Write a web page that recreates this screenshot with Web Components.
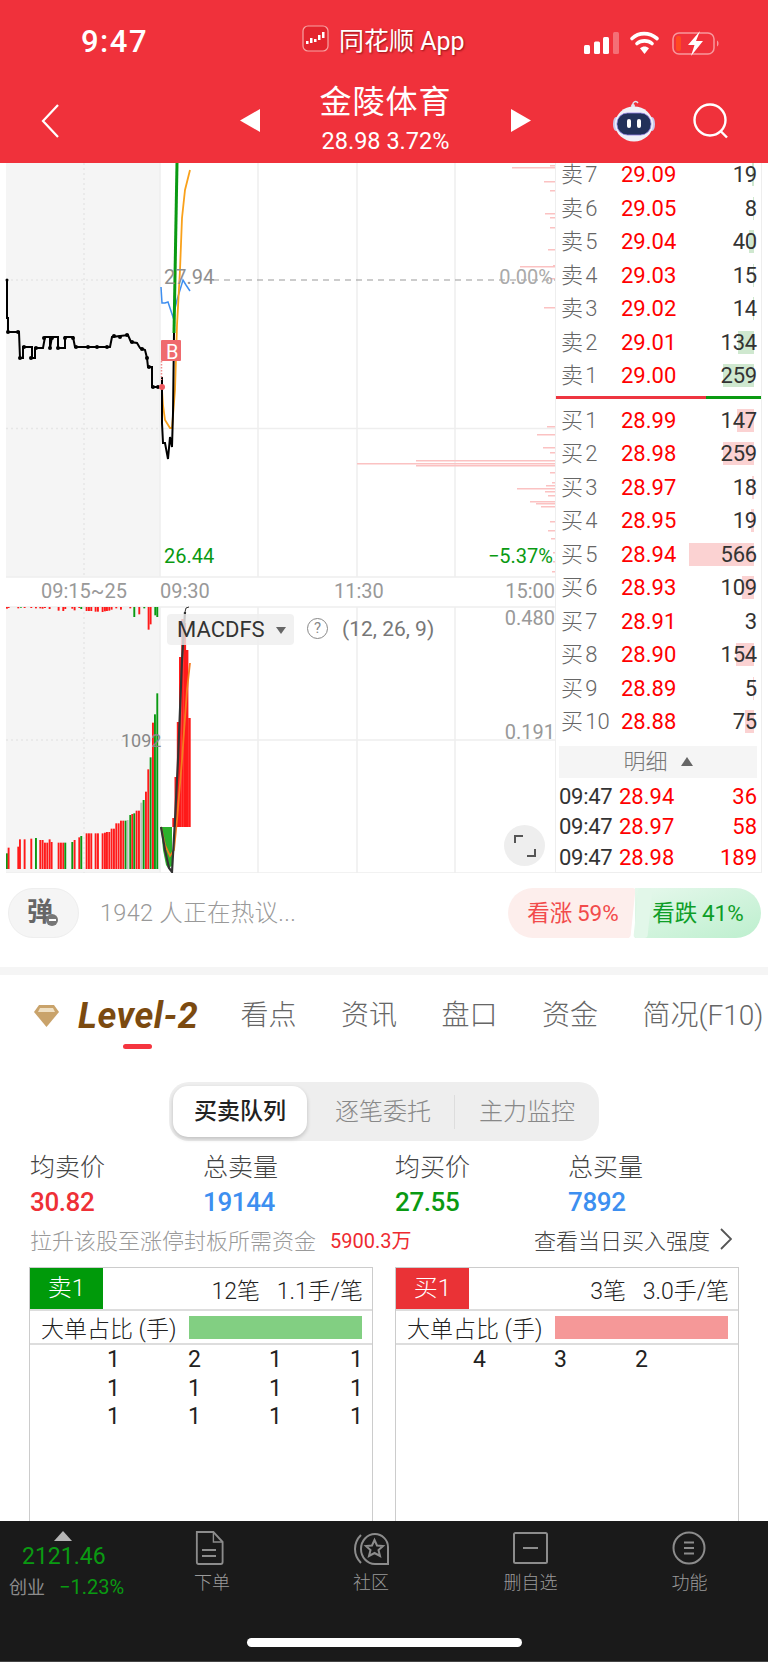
<!DOCTYPE html>
<html lang="zh">
<head>
<meta charset="utf-8">
<title>金陵体育</title>
<style>
  html, body { margin: 0; padding: 0; background: #fff; }
  body {
    width: 768px;
    height: 1662px;
    overflow: hidden;
    display: flex;
    flex-direction: column;
    font-family: Roboto, "Noto Sans CJK SC", sans-serif;
  }
  main { flex: 1; min-height: 0; overflow: hidden; }
  .market { display: flex; height: 710px; }
</style>
</head>
<body>
  <st-header name="金陵体育" quote="28.98 3.72%"></st-header>
  <main>
    <div class="market">
      <st-chart></st-chart>
      <st-book></st-book>
    </div>
    <st-comment></st-comment>
    <st-tabs></st-tabs>
    <st-stats></st-stats>
    <st-queues></st-queues>
  </main>
  <st-dock></st-dock>

<script>
const FONT = 'Roboto, "Noto Sans CJK SC", sans-serif';

class StHeader extends HTMLElement {
  connectedCallback() {
    this.attachShadow({mode: 'open'}).innerHTML = `
      <style>
        :host { display: block; height: 163px; background: #f0313b; color: #fff; font-family: ${FONT}; flex: none; }
        .status { height: 80px; display: grid; grid-template-columns: 302px 280px 186px; align-items: center; padding-top: 3px; box-sizing: border-box; }
        .time { font-size: 31px; font-weight: 500; padding-left: 81px; letter-spacing: 1.500px; }
        .app { display: flex; align-items: center; gap: 10px; font-size: 25px; text-shadow: 1px 1px 2px rgba(90,0,0,.6); margin-top: -6px; }
        .sys { display: flex; align-items: center; }
        .nav { height: 83px; display: grid; grid-template-columns: 240px 20px 1fr 20px 237px; align-items: center; }
        .back { padding-left: 40px; display: flex; margin-top: -2px; }
        .tri { display: flex; margin-top: -2px; }
        .title { text-align: center; margin-top: -6px; }
        .name { font-size: 32px; line-height: 40px; letter-spacing: 1px; }
        .quote { font-size: 23.500px; line-height: 30px; margin-top: 4px; }
        .right { display: flex; align-items: center; padding-left: 81px; gap: 37px; margin-top: -2px; }
      </style>
      <div class="status">
        <div class="time">9:47</div>
        <div class="app">
          <svg width="27" height="27" viewBox="0 0 27 27">
            <rect x="1" y="1" width="25" height="25" rx="5" fill="#e3242e" stroke="#f7a3a3" stroke-width="1.2"/>
            <g fill="#fff"><rect x="4" y="16" width="2.5" height="3"/><rect x="8" y="13" width="2.5" height="5"/><rect x="12" y="14" width="2.5" height="3"/><rect x="16" y="10" width="2.5" height="5"/><rect x="20" y="7" width="2.5" height="6"/></g>
          </svg>
          <span>同花顺 App</span>
        </div>
        <div class="sys">
          <svg width="140" height="30" viewBox="580 27 140 30">
            <g fill="#fff">
              <rect x="582" y="45" width="6" height="9" rx="1.5"/>
              <rect x="592" y="41.500" width="6" height="12.500" rx="1.500"/>
              <rect x="601" y="37" width="6" height="17" rx="1.500"/>
              <rect x="611" y="32" width="6" height="22" rx="1.500" opacity=".3"/>
            </g>
            <g fill="none" stroke="#fff" stroke-width="3.600" stroke-linecap="round">
              <path d="M630 38.500C637 32 647 32 655 38.500"/>
              <path d="M635 43.500C639 40 646 40 650 43.500"/>
            </g>
            <path d="M642.500 54L638 48.200C641 45.800 644 45.800 647 48.200Z" fill="#fff"/>
            <rect x="671" y="33" width="41" height="21" rx="6" fill="none" stroke="#fff" stroke-opacity=".5" stroke-width="1.500"/>
            <path d="M715 40.500C717 41.500 717 45.500 715 46.500Z" fill="#fff" fill-opacity=".5"/>
            <rect x="674" y="36" width="5" height="15" rx="2" fill="#ff4a20"/>
            <path d="M698 31L686 45H692.500L689 56L701 41H694Z" fill="#fff"/>
          </svg>
        </div>
      </div>
      <div class="nav">
        <div class="back">
          <svg width="20" height="36" viewBox="0 0 20 36"><path d="M18 2L3 18L18 34" fill="none" stroke="#fff" stroke-width="2.200"/></svg>
        </div>
        <div class="tri"><svg width="20" height="23" viewBox="0 0 20 23"><path d="M20 0V23L0 11.500Z" fill="#fff"/></svg></div>
        <div class="title">
          <div class="name">${this.getAttribute('name')}</div>
          <div class="quote">${this.getAttribute('quote')}</div>
        </div>
        <div class="tri"><svg width="20" height="23" viewBox="0 0 20 23"><path d="M0 0V23L20 11.500Z" fill="#fff"/></svg></div>
        <div class="right">
          <svg width="44" height="42" viewBox="0 0 44 42">
            <path d="M21 6C20 2 24 0 26 3" fill="none" stroke="#dfe3ef" stroke-width="1.500"/>
            <circle cx="21" cy="6" r="2" fill="#dfe3ef"/>
            <ellipse cx="4" cy="24" rx="3" ry="7" fill="#c9c8ee"/>
            <ellipse cx="40" cy="24" rx="3" ry="7" fill="#c9c8ee"/>
            <ellipse cx="22" cy="24" rx="19" ry="17.500" fill="#f0f1f8"/>
            <rect x="5" y="13" width="34" height="22" rx="10.500" fill="#22315a" stroke="#8f7fe0" stroke-width=".8"/>
            <rect x="15" y="19" width="4" height="9" rx="2" fill="#fff"/>
            <rect x="25" y="19" width="4" height="9" rx="2" fill="#fff"/>
          </svg>
          <svg width="36" height="36" viewBox="0 0 36 36"><circle cx="17" cy="17" r="15.500" fill="none" stroke="#fff" stroke-width="2.400"/><path d="M27.500 28L34 34.500" stroke="#fff" stroke-width="2.400"/></svg>
        </div>
      </div>`;
  }
}

class StChart extends HTMLElement {
  connectedCallback() {
    // [left edge in 3x crop px, top in 3x crop px, colour] of the pre-open volume bars
    const r = '#ff1a1a', g = '#0a9a12', s = '#bdbdbd';
    const vol = [[18,760,g],[23,743,r],[52,740,r],[57,718,r],[71,718,r],[91,716,r],[105,714,g],[118,720,r],[125,720,r],[132,728,r],[139,728,r],[146,718,r],[152,726,r],
      [173,728,r],[180,728,r],[187,728,r],[193,728,g],[214,726,g],[221,720,r],[235,712,r],[241,708,g],[257,700,r],[264,700,r],[271,700,r],[284,700,r],[291,700,r],
      [305,700,r],[312,698,r],[318,696,r],[325,696,r],[332,686,r],[339,686,r],[346,670,r],[353,670,r],[360,662,r],[367,662,r],[374,662,g],[380,660,s],[388,645,g],[394,642,r],
      [400,640,g],[407,632,r],[414,632,r],[421,608,s],[428,600,g],[435,575,r],[442,508,r],[449,472,g],[456,368,r],[462,343,g],[469,280,g]];
    const volBars = vol.map(([x, t, c]) => `<rect x="${x / 3}" y="${600 + t / 3}" width="1.9" height="${869 - 600 - t / 3}" fill="${c}"/>`).join('');
    const top = [[18,5,r],[23,3,r],[52,4,r],[60,2,g],[71,3,r],[91,3,r],[105,4,r],[118,4,r],[125,5,r],[132,3,r],[146,6,r],[173,11,r],[187,12,r],[193,6,r],[214,5,r],[221,10,r],[235,3,r],[241,6,g],
      [257,12,r],[264,12,r],[271,12,r],[284,14,r],[291,14,r],[305,15,r],[312,13,r],[318,12,r],[325,11,r],[332,8,r],[346,4,r],[360,8,r],[388,4,r],[400,30,g],[415,22,r],[430,4,g],[443,68,r],[449,52,r],[463,25,g],[469,30,g]];
    const topBars = top.map(([x, h, c]) => `<rect x="${x / 3}" y="607" width="1.9" height="${h / 3}" fill="${c}"/>`).join('');
    const sell = [[165,550],[167,512],[181,544],[190,550],[213,545],[217,550],[227,550],[249,548],[265,553],[266,520],[278,550],[307,544]];
    const buy = [[426,547],[434,537],[447,543],[452,550],[460,416],[463,357],[465,416],[472,550],[482,552],[485,546],[488,517],[491,545],[495,548],[501,530],[503,536],[506,541],[521,550],[530,548],[538,551],[552,553],[561,553],[571,552]];
    const depth = sell.concat(buy).map(([y, x]) => `<rect x="${x}" y="${y}" width="${555 - x}" height="1.500" fill="#fbc2c2"/>`).join('');
    const macdBars = [[172.3,818],[174.5,777],[176.8,722],[179,657],[181.3,619],[183.6,623],[185.9,650],[188.2,718]]
      .map(([x, y]) => `<rect x="${x}" y="${y}" width="2.500" height="${827 - y}" fill="${r}"/>`).join('');

    this.attachShadow({mode: 'open'}).innerHTML = `
      <style>
        :host { display: block; position: relative; width: 555px; height: 710px; flex: none; font-family: ${FONT}; overflow: hidden; }
        svg { display: block; }
        .t { position: absolute; font-size: 20px; line-height: 24px; color: #999; white-space: nowrap; }
        .chip { position: absolute; left: 167px; top: 451px; width: 127px; height: 31px; border-radius: 4px; background: rgba(238,238,238,.8); color: #333; font-size: 22px; line-height: 32px; padding-left: 10px; box-sizing: border-box; }
        .chip::after { content: ""; position: absolute; left: 109px; top: 13px; border: 5.500px solid transparent; border-top: 7px solid #666; border-bottom: 0; }
        .help { position: absolute; left: 307px; top: 455px; width: 21px; height: 21px; box-sizing: border-box; border: 1.500px solid #888; border-radius: 50%; font-size: 15px; line-height: 18px; text-align: center; color: #888; }
        .expand { position: absolute; left: 504px; top: 662px; width: 41px; height: 41px; border-radius: 50%; background: #eee; display: flex; align-items: center; justify-content: center; }
      </style>
      <svg width="555" height="710" viewBox="0 163 555 710">
        <rect x="6" y="163" width="154" height="414" fill="#f5f5f5"/>
        <rect x="6" y="607" width="154" height="266" fill="#f5f5f5"/>
        <g stroke="#eee" stroke-width="1.500" fill="none">
          <path d="M160 163V577M258 163V577M357 163V577M455 163V577M6 577H555M160 428.500H555"/>
          <path d="M160 607V873M258 607V873M357 607V873M455 607V873M6 607H555M160 740H555M6 873H555"/>
          <path d="M84 163V577M84 607V873M6 280H160M6 428.500H160M6 740H160" stroke="#e6e6e6" stroke-dasharray="2 3"/>
        </g>
        ${depth}
        <path d="M213 280H555" stroke="#999" stroke-width="1.200" stroke-dasharray="6 5"/>
        <path d="M161 287L162 303L165 303L168 302L173 317L177 300L183 280L186 285L190 291" fill="none" stroke="#3f8ff0" stroke-width="1.500"/>
        <path d="M162 390L163 405L165 420L170 428L172 428L175 390L177 325L180 270L182 218L185 190L190 170" fill="none" stroke="#f9a11b" stroke-width="1.800"/>
        <path d="M7 280V318H8V332H19L20 358H23V347H32V358H35V348H43L45 337H50V348L52 337H58V348H65V337H73L75 347H110L112 337L128 335L131 342L137 343L140 348L145 350L147 358L148 367H152V387H161" fill="none" stroke="#000" stroke-width="2"/>
        <g fill="#000">
          <circle cx="7" cy="280" r="1.500"/><circle cx="8" cy="332" r="2"/><circle cx="18" cy="332" r="2"/><circle cx="20" cy="358" r="2"/><circle cx="24" cy="347" r="2"/><circle cx="31" cy="358" r="2"/><circle cx="36" cy="348" r="2"/><circle cx="44" cy="338" r="2"/><circle cx="50" cy="348" r="2"/><circle cx="52" cy="338" r="2"/><circle cx="58" cy="348" r="2"/><circle cx="65" cy="338" r="2"/><circle cx="73" cy="338" r="2"/><circle cx="76" cy="347" r="2"/><circle cx="88" cy="347" r="2"/><circle cx="97" cy="347" r="2"/><circle cx="107" cy="347" r="2"/><circle cx="114" cy="336" r="2"/><circle cx="120" cy="337" r="2"/><circle cx="127" cy="335" r="2"/><circle cx="132" cy="342" r="2"/><circle cx="142" cy="349" r="2"/><circle cx="147" cy="358" r="2"/><circle cx="149" cy="367" r="2"/><circle cx="153" cy="387" r="2"/><circle cx="158" cy="387" r="2"/>
        </g>
        <path d="M162 377V423L163 443L165 443L168 459L170 437L172 447L173 413L174 333" fill="none" stroke="#000" stroke-width="2"/>
        <path d="M174 333L177 163" fill="none" stroke="#0a9a12" stroke-width="3"/>
        <rect x="161" y="340" width="20" height="21" rx="1" fill="#ef6a6e"/>
        <path d="M161.500 361V380" stroke="#ef8a8a" stroke-width="1.500" stroke-dasharray="1.500 1.500"/>
        <circle cx="162" cy="387" r="3" fill="#ef5a60"/>
        ${topBars}${volBars}
        <path d="M161 827H172V866L168 868L166 865L163 850Z" fill="#2cb12c"/>
        ${macdBars}
        <path d="M161 827L165 845L170 856L174 850L177 820L182 760L187 690L190 663" fill="none" stroke="#f57d1f" stroke-width="1.800"/>
        <path d="M161 827L165 850L169 868L172 872L175 820L178 760L182 660L185 612" fill="none" stroke="#333" stroke-width="2.200"/>
        <path d="M185 612L186 608L189 607" fill="none" stroke="#333" stroke-width="1"/>
      </svg>
      <span class="t" style="left:164px;top:102px;color:#8f8f8f">27.94</span>
      <span class="t" style="right:2px;top:102px;color:#aaa">0.00%</span>
      <span class="t" style="left:166px;top:177px;color:#fff;font-size:20px">B</span>
      <span class="t" style="left:164px;top:381px;color:#0a9a12">26.44</span>
      <span class="t" style="right:2px;top:381px;color:#0a9a12">−5.37%</span>
      <span class="t" style="left:41px;top:416px">09:15~25</span>
      <span class="t" style="left:160px;top:416px">09:30</span>
      <span class="t" style="left:334px;top:416px">11:30</span>
      <span class="t" style="right:0;top:416px">15:00</span>
      <span class="t" style="right:0;top:443px">0.480</span>
      <span class="t" style="right:0;top:557px">0.191</span>
      <span class="t" style="left:121px;top:566px;font-size:18px;color:#888">1092</span>
      <div class="chip">MACDFS</div>
      <div class="help">?</div>
      <span class="t" style="left:342px;top:454px;font-size:21px;color:#777">(12, 26, 9)</span>
      <div class="expand">
        <svg width="22" height="22" viewBox="0 0 22 22"><path d="M1 8V1H9M21 14V21H13" fill="none" stroke="#555" stroke-width="2"/></svg>
      </div>`;
  }
}

class BookRow extends HTMLElement {
  connectedCallback() {
    const bar = this.getAttribute('bar') || 0;
    const side = this.getAttribute('side');
    this.attachShadow({mode: 'open'}).innerHTML = `
      <style>
        :host { display: grid; grid-template-columns: 60px 1fr auto; align-items: center; position: relative; height: 33.500px; padding: 0 4px 0 5px; font-size: 22px; line-height: 33px; }
        .l { color: #666; white-space: nowrap; font-weight: 300; word-spacing: -3px; }
        .p { color: #f00; }
        .v { color: #333; position: relative; letter-spacing: -.2px; }
        .bar { position: absolute; right: 7px; top: 5px; height: 23px; background: ${side === 'sell' ? '#cfe8cf' : '#fbd2d2'}; }
      </style>
      <div class="bar" style="width:${bar}px"></div>
      <div class="l">${this.getAttribute('label')}</div>
      <div class="p">${this.getAttribute('price')}</div>
      <div class="v">${this.getAttribute('vol')}</div>`;
  }
}

class StBook extends HTMLElement {
  connectedCallback() {
    const sells = [['卖 7','29.09','19',2],['卖 6','29.05','8',1],['卖 5','29.04','40',5],['卖 4','29.03','15',1],['卖 3','29.02','14',1],['卖 2','29.01','134',16],['卖 1','29.00','259',31]];
    const buys = [['买 1','28.99','147',17],['买 2','28.98','259',31],['买 3','28.97','18',2],['买 4','28.95','19',3],['买 5','28.94','566',65],['买 6','28.93','109',12],['买 7','28.91','3',0],['买 8','28.90','154',18],['买 9','28.89','5',1],['买 10','28.88','75',9]];
    const row = (side) => ([l, p, v, b]) => `<book-row side="${side}" label="${l}" price="${p}" vol="${v}" bar="${b}"></book-row>`;
    const trades = [['28.94','36'],['28.97','58'],['28.98','189']];
    this.attachShadow({mode: 'open'}).innerHTML = `
      <style>
        :host { display: block; width: 207px; height: 710px; flex: none; box-sizing: border-box; border-left: 1.500px solid #eee; border-right: 1.500px solid #eee; border-bottom: 1.500px solid #eee; font-family: ${FONT}; overflow: hidden; }
        .sells { margin-top: -5px; }
        .sep { height: 3px; margin: 3px 0 5px; background: linear-gradient(90deg, #ee3540 0 73%, #0a9a12 73%); }
        .detail { margin: 7px 4px 4px 3px; height: 32px; background: #f5f5f5; color: #777; font-size: 22px; line-height: 32px; display: flex; justify-content: center; align-items: center; gap: 13px; font-weight: 300; }
        .detail::after { content: ""; border: 6px solid transparent; border-bottom: 9px solid #666; border-top: 0; }
        .trade { display: grid; grid-template-columns: 60px 1fr auto; height: 30.500px; line-height: 30px; font-size: 22px; padding: 0 4px 0 3px; color: #f00; }
        .trade b { font-weight: 400; color: #333; letter-spacing: -.3px; }
      </style>
      <div class="sells">${sells.map(row('sell')).join('')}</div>
      <div class="sep"></div>
      <div>${buys.map(row('buy')).join('')}</div>
      <div class="detail">明细</div>
      ${trades.map(([p, v]) => `<div class="trade"><b>09:47</b><span>${p}</span><span>${v}</span></div>`).join('')}`;
  }
}

class StComment extends HTMLElement {
  connectedCallback() {
    this.attachShadow({mode: 'open'}).innerHTML = `
      <style>
        :host { display: flex; align-items: flex-start; height: 102px; box-sizing: border-box; padding: 15px 7px 0 8px; border-bottom: 8px solid #f5f5f5; font-family: ${FONT}; }
        .dan { position: relative; width: 71px; height: 50px; box-sizing: border-box; background: #f5f5f5; border: 1.500px solid #eee; border-radius: 25px; color: #666; font-size: 26px; font-weight: 700; line-height: 46px; padding-left: 18px; }
        .dan::after { content: ""; position: absolute; left: 37px; top: 25px; width: 12px; height: 12px; border-radius: 50%; background: radial-gradient(#fff 0 0) center/7px 2px no-repeat #777; }
        .hint { margin-left: 21px; color: #999; font-size: 23.500px; line-height: 50px; flex: 1; font-weight: 300; letter-spacing: .3px; }
        .votes { display: flex; height: 50px; font-size: 22.500px; line-height: 50px; text-align: center; word-spacing: -1px; }
        .up, .down { position: relative; }
        .up { width: 121px; padding-left: 9px; box-sizing: border-box; color: #f24b4b; background: #fdeeec; border-radius: 25px 0 0 25px; white-space: nowrap; }
        .up::after { content: ""; position: absolute; right: -4px; top: 0; bottom: 0; width: 14px; background: #fdeeec; border-radius: 3px; transform: skewX(-6deg); }
        .down { width: 126px; margin-left: 6px; color: #0e9e28; background: linear-gradient(160deg, #e6f8ec, #bdefce); border-radius: 0 25px 25px 0; white-space: nowrap; }
        .down::before { content: ""; position: absolute; left: 1px; top: 0; bottom: 0; width: 14px; background: #e2f7e9; border-radius: 3px; transform: skewX(-6deg); }
        span { position: relative; z-index: 1; }
      </style>
      <div class="dan">弹</div>
      <div class="hint">1942 人正在热议...</div>
      <div class="votes"><div class="up"><span>看涨 59%</span></div><div class="down"><span>看跌 41%</span></div></div>`;
  }
}

class StTabs extends HTMLElement {
  connectedCallback() {
    this.attachShadow({mode: 'open'}).innerHTML = `
      <style>
        :host { display: block; height: 166px; font-family: ${FONT}; box-sizing: border-box; padding-top: 21px; }
        .row { display: flex; gap: 44.500px; height: 40px; padding-left: 34px; font-size: 28px; line-height: 40px; color: #666; white-space: nowrap; font-weight: 300; }
        .lv2 { position: relative; display: flex; align-items: center; width: 162px; flex: none; gap: 19px; }
        .lv2 svg { flex: none; }
        .lv2 b { font: italic 700 36px/40px Roboto, sans-serif; color: #7b4a10; letter-spacing: .5px; }
        .lv2::after { content: ""; position: absolute; left: 89px; top: 48px; width: 29px; height: 5px; border-radius: 3px; background: #f5353f; }
        .seg { display: flex; align-items: center; width: 430px; height: 59px; margin: 46px 0 0 169px; border-radius: 20px; background: #eee; box-sizing: border-box; padding: 0 4px; font-size: 24px; line-height: 34px; color: #888; font-weight: 300; }
        .seg div { text-align: center; }
        .on { width: 134px; height: 51px; line-height: 51px; border-radius: 15px; background: #fff; box-shadow: 0 2px 4px rgba(0,0,0,.2); color: #222; font-weight: 500; font-size: 23px; }
        .mid { width: 148px; height: 34px; box-sizing: border-box; padding-left: 5px; border-right: 1.500px solid #ddd; }
        .last { flex: 1; padding-left: 4px; }
      </style>
      <div class="row">
        <div class="lv2">
          <svg width="25" height="22" viewBox="0 0 25 22"><path d="M5 0H20L25 7L12.500 22L0 7Z" fill="#c9a36b"/><path d="M6 3H19L21 7H4Z" fill="#efe0c4"/></svg>
          <b>Level-2</b>
        </div>
        <div>看点</div><div>资讯</div><div>盘口</div><div>资金</div><div>简况(F10)</div>
      </div>
      <div class="seg"><div class="on">买卖队列</div><div class="mid">逐笔委托</div><div class="last">主力监控</div></div>`;
  }
}

class StStats extends HTMLElement {
  connectedCallback() {
    const cols = [['均卖价','30.82','#ee3036'],['总卖量','19144','#3d8ff0'],['均买价','27.55','#0a9a12'],['总买量','7892','#3d8ff0']];
    this.attachShadow({mode: 'open'}).innerHTML = `
      <style>
        :host { display: block; font-family: ${FONT}; padding: 11px 0 0 30px; }
        .cols { display: grid; grid-template-columns: 173px 192px 173px auto; }
        .k { font-size: 25px; line-height: 32px; color: #444; font-weight: 300; }
        .v { font-size: 26px; line-height: 36px; font-weight: 500; letter-spacing: -.4px; }
        .note { display: flex; align-items: center; height: 30px; margin-top: 4px; padding-right: 36px; font-size: 22px; color: #999; font-weight: 300; white-space: nowrap; }
        .need { color: #ee2a30; font-size: 20px; margin-left: 14px; flex: 1; font-weight: 400; }
        .more { color: #444; display: flex; align-items: center; gap: 10px; }
      </style>
      <div class="cols">
        ${cols.map(([k, v, c]) => `<div><div class="k">${k}</div><div class="v" style="color:${c}">${v}</div></div>`).join('')}
      </div>
      <div class="note">
        <span>拉升该股至涨停封板所需资金</span><span class="need">5900.3万</span>
        <span class="more">查看当日买入强度
          <svg width="12" height="22" viewBox="0 0 12 22"><path d="M1 1L11 11L1 21" fill="none" stroke="#555" stroke-width="1.800"/></svg>
        </span>
      </div>`;
  }
}

class QueuePanel extends HTMLElement {
  connectedCallback() {
    const color = this.getAttribute('color');
    const fill = this.getAttribute('fill');
    const nums = this.getAttribute('nums').split(',');
    this.attachShadow({mode: 'open'}).innerHTML = `
      <style>
        :host { display: block; width: 344px; height: 300px; box-sizing: border-box; border: 1.500px solid #ccc; font-size: 23px; color: #222; font-weight: 300; }
        .head { display: flex; align-items: center; height: 41px; border-bottom: 2px solid #ddd; }
        .badge { width: 73px; height: 41px; line-height: 41px; background: ${color}; color: #fff; text-align: center; font-size: 24px; }
        .info { flex: 1; text-align: right; padding-right: 9px; white-space: pre; }
        .big { display: flex; align-items: center; height: 32px; border-bottom: 2px solid #ddd; padding-right: 10px; white-space: nowrap; }
        .big span { width: 159px; padding-left: 11px; box-sizing: border-box; }
        .big i { flex: 1; height: 23px; background: ${fill}; }
        .nums { display: grid; grid-template-columns: repeat(4, 81px); padding: 1px 0 0 9px; line-height: 28.700px; text-align: right; font-weight: 400; }
      </style>
      <div class="head"><div class="badge">${this.getAttribute('tag')}</div><div class="info"><slot></slot></div></div>
      <div class="big"><span>大单占比 (手)</span><i></i></div>
      <div class="nums">${nums.map(n => `<div>${n}</div>`).join('')}</div>`;
  }
}

class StQueues extends HTMLElement {
  connectedCallback() {
    this.attachShadow({mode: 'open'}).innerHTML = `
      <style>
        :host { display: flex; gap: 22px; padding: 13px 0 0 29px; font-family: ${FONT}; }
      </style>
      <queue-panel tag="卖1" color="#009a0a" fill="#82cf82" nums="1,2,1,1,1,1,1,1,1,1,1,1">12笔   1.1手/笔</queue-panel>
      <queue-panel tag="买1" color="#ea3236" fill="#f59898" nums="4,3,2">3笔   3.0手/笔</queue-panel>`;
  }
}

class StDock extends HTMLElement {
  connectedCallback() {
    const stroke = 'fill="none" stroke="#8c8c8c" stroke-width="2"';
    const items = [
      ['下单', `<path d="M2 1H20L30 11V31Q30 33 28 33H4Q2 33 2 31Z" transform="translate(1 0) scale(.92 1)" ${stroke}/><path d="M20 1V11H30" transform="translate(1 0) scale(.92 1)" fill="none" stroke="#8c8c8c" stroke-width="1.500"/><path d="M8 19H22M8 25H22" ${stroke}/>`],
      ['社区', `<path d="M7 4C-1 12 -1 24 7 32" transform="translate(1 0)" ${stroke}/><path d="M22 3C29 3 35 9 35 16V33H22C14 33 8 26 8 18C8 10 14 3 22 3Z" ${stroke}/><path d="M21.500 9L24 14.500L30 15L25.500 19L27 25L21.500 22L16 25L17.500 19L13 15L19 14.500Z" ${stroke}/>`],
      ['删自选', `<rect x="1" y="2" width="33" height="30" rx="1.500" ${stroke}/><path d="M10 17H25" ${stroke}/>`],
      ['功能', `<circle cx="17" cy="17" r="15.500" ${stroke}/><path d="M12 11.500H22M12 17H22M12 22.500H22" ${stroke}/>`],
    ];
    this.attachShadow({mode: 'open'}).innerHTML = `
      <style>
        :host { display: grid; grid-template-columns: 132px 160px 158px 161px 157px; position: relative; height: 141px; flex: none; background: #1a1a1a; font-family: ${FONT}; box-sizing: border-box; padding-top: 10px; border-bottom: 1px solid #444; }
        .index { position: relative; padding-left: 9px; }
        .index::before { content: ""; position: absolute; left: 54px; top: 0; border: 9px solid transparent; border-bottom: 10px solid #b5b5b5; border-top: 0; }
        .price { color: #0a9a12; font-size: 23px; line-height: 28px; padding: 12px 0 0 13px; }
        .sub { display: flex; gap: 14px; align-items: baseline; margin-top: 2px; color: #8c8c8c; font-size: 18px; line-height: 28px; }
        .sub b { font-weight: 400; font-size: 20px; color: #0a9a12; }
        .item { display: flex; flex-direction: column; align-items: center; color: #9a9a9a; font-size: 18px; line-height: 24px; gap: 5px; font-weight: 300; }
        .home { position: absolute; left: 247px; top: 117px; width: 275px; height: 9px; border-radius: 5px; background: #fff; }
      </style>
      <div class="index">
        <div class="price">2121.46</div>
        <div class="sub"><span>创业</span><b>−1.23%</b></div>
      </div>
      ${items.map(([t, p]) => `<div class="item"><svg width="36" height="35" viewBox="0 0 36 35">${p}</svg><span>${t}</span></div>`).join('')}
      <div class="home"></div>`;
  }
}

customElements.define('st-header', StHeader);
customElements.define('st-chart', StChart);
customElements.define('book-row', BookRow);
customElements.define('st-book', StBook);
customElements.define('st-comment', StComment);
customElements.define('st-tabs', StTabs);
customElements.define('st-stats', StStats);
customElements.define('queue-panel', QueuePanel);
customElements.define('st-queues', StQueues);
customElements.define('st-dock', StDock);
</script>
</body>
</html>
